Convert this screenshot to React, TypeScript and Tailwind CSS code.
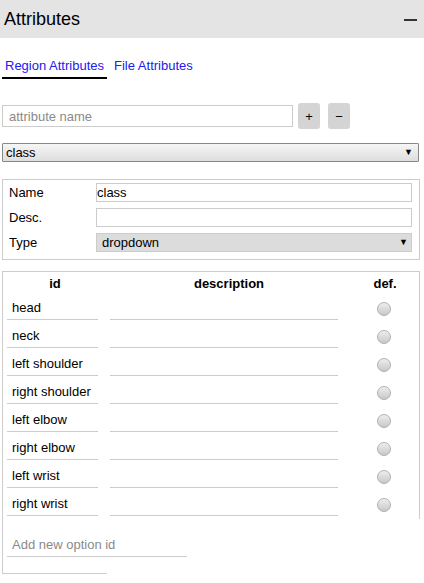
const options = [
  'head',
  'neck',
  'left shoulder',
  'right shoulder',
  'left elbow',
  'right elbow',
  'left wrist',
  'right wrist',
];

function Radio() {
  return (
    <div className="w-[14px] h-[14px] rounded-full border border-[#b0b0b0] bg-gradient-to-b from-[#eeeeee] to-[#c8c8c8]" />
  );
}

export default function App() {
  return (
    <div className="w-[424px] h-[583px] overflow-hidden bg-white text-black font-['Liberation_Sans',Arial,sans-serif]">
      {/* Panel header */}
      <div className="h-[38px] bg-[#e4e4e4] flex items-center justify-between pl-[4px] pr-[7px]">
        <span className="text-[18px] leading-none">Attributes</span>
        <span className="w-[13px] h-[2px] bg-[#333] mt-[1px]" />
      </div>

      {/* Tabs */}
      <div className="flex items-end mt-[20px] pl-[2px] text-[13px] leading-[15px] text-[#2020f0]">
        <div className="px-[3px] pb-[4px] border-b-2 border-black">Region Attributes</div>
        <div className="ml-[3px] px-[4px] pb-[4px] border-b-2 border-transparent">File Attributes</div>
      </div>

      {/* New attribute */}
      <div className="flex items-center mt-[24px] pl-[2px]">
        <input
          placeholder="attribute name"
          className="w-[291px] h-[22px] border border-[#ccc] px-[6px] text-[13px] placeholder:text-[#8a8a8a] outline-none"
        />
        <button className="ml-[5px] w-[22px] h-[26px] rounded-[3px] bg-[#d4d4d4] text-[13px] leading-none">+</button>
        <button className="ml-[8px] w-[22px] h-[26px] rounded-[3px] bg-[#d4d4d4] text-[13px] leading-none">−</button>
      </div>

      {/* Attribute select */}
      <div className="mt-[14px] mx-[2px] w-[417px] h-[19px] border border-[#888] rounded-[1px] bg-gradient-to-b from-[#f6f6f6] to-[#dedede] flex items-center justify-between pl-[3px] pr-[5px] text-[13px]">
        <span>class</span>
        <span className="text-[9px]">▼</span>
      </div>

      {/* Attribute properties */}
      <div className="mt-[17px] mx-[2px] w-[418px] border border-[#ccc] pl-[6px] pt-[3px] pb-[7px] text-[13px]">
        <div className="flex items-center h-[19px]">
          <span className="w-[87px]">Name</span>
          <div className="w-[316px] h-[19px] border border-[#ccc] leading-[17px]">class</div>
        </div>
        <div className="flex items-center h-[19px] mt-[6px]">
          <span className="w-[87px]">Desc.</span>
          <div className="w-[316px] h-[19px] border border-[#ccc]" />
        </div>
        <div className="flex items-center h-[19px] mt-[6px]">
          <span className="w-[87px]">Type</span>
          <div className="w-[316px] h-[19px] border border-[#ccc] bg-[#dcdcdc] flex items-center justify-between pl-[5px] pr-[3px]">
            <span>dropdown</span>
            <span className="text-[9px]">▼</span>
          </div>
        </div>
      </div>

      {/* Options */}
      <div className="mt-[11px] mx-[2px] w-[418px] border-l border-t border-[#ccc] text-[13px]">
        <div className="border-r border-[#ccc]">
          <div className="flex items-center h-[23px] font-bold">
            <span className="w-[104px] text-center">id</span>
            <span className="w-[238px] text-center pl-[6px]">description</span>
            <span className="flex-1 text-center pl-[6px]">def.</span>
          </div>
          {options.map((o) => (
            <div key={o} className="flex items-center h-[28px]">
              <div className="ml-[4px] w-[91px] h-[24px] border-b border-[#ccc] pl-[5px] leading-[24px] mt-[-2px]">{o}</div>
              <div className="ml-[12px] w-[228px] h-[24px] border-b border-[#ccc] mt-[-2px]" />
              <div className="flex-1 flex justify-center pl-[10px]">
                <Radio />
              </div>
            </div>
          ))}
        </div>
        <div className="pt-[13px]">
          <div className="ml-[4px] w-[180px] h-[25px] border-b border-[#ccc] pl-[5px] leading-[25px] text-[#8a8a8a]">
            Add new option id
          </div>
        </div>
        <div className="mt-[16px] w-[104px] border-b border-[#ccc]" />
      </div>
    </div>
  );
}
